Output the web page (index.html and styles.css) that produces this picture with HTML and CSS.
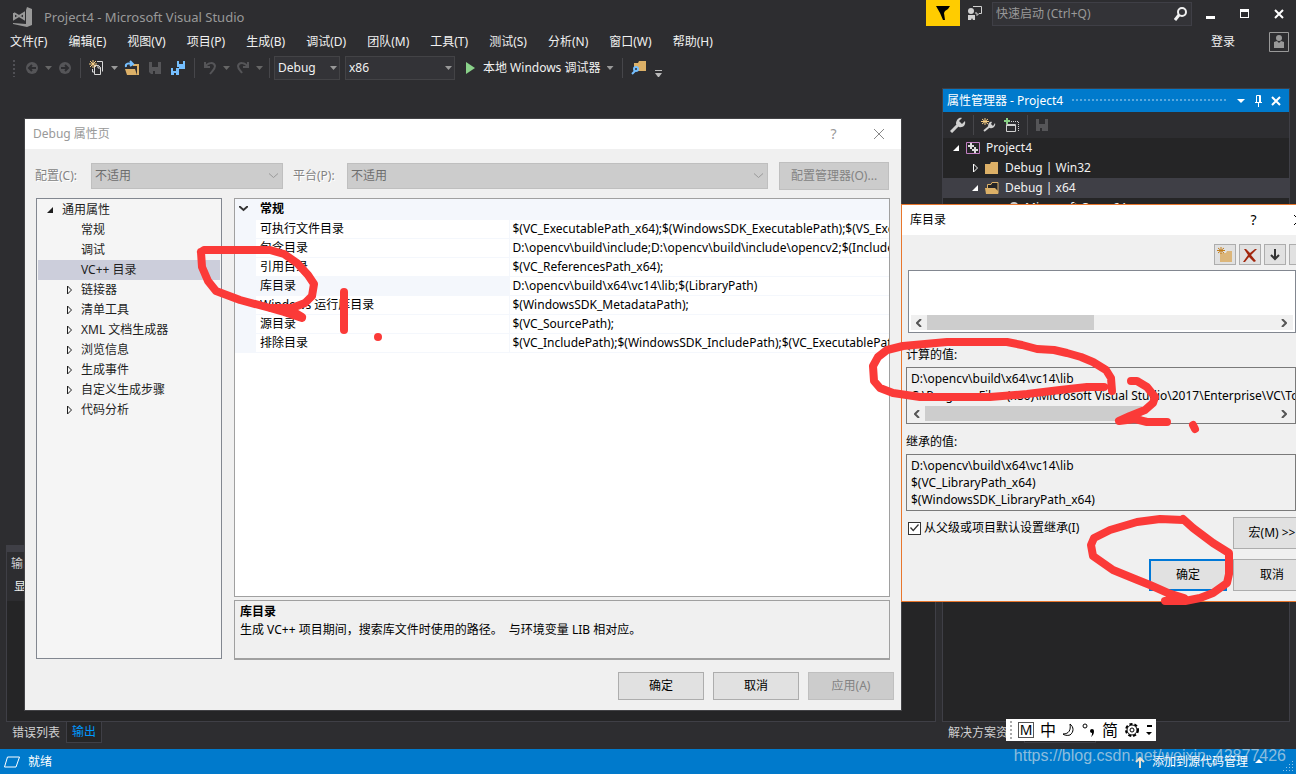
FILE: index.html
```html
<!DOCTYPE html>
<html lang="zh-CN">
<head>
<meta charset="utf-8">
<title>Project4 - Microsoft Visual Studio</title>
<link rel="stylesheet" href="styles.css">
</head>
<body>
<div class="ide">
  <header class="titlebar">
    <svg class="logo" width="21" height="20" viewBox="0 0 21 20"><path fill="#999" d="M15 0l5 2v16l-5 2-14-3v-1l13 1V3z"/><path fill="none" stroke="#999" stroke-width="2" d="M2 6v6l10-6v6L2 6"/></svg>
    <span class="app-title">Project4 - Microsoft Visual Studio</span>
    <button class="flag" aria-label="通知"><svg width="16" height="16" viewBox="0 0 16 16"><path d="M1 1h14l-2 3-3 2-1 2 1 7H8L5 8z"/></svg></button>
    <button class="feedback" aria-label="反馈"><svg width="16" height="16" viewBox="0 0 16 16"><path fill="#d0d0d0" d="M1 10h7v5H6l-1-2-1 2H1z"/><circle cx="4" cy="6" r="3" fill="#d0d0d0"/><path fill="none" stroke="#d0d0d0" d="M6 1.500h8.500v7H12l-2 2V8H8"/></svg></button>
    <div class="search"><input type="text" placeholder="快速启动 (Ctrl+Q)" aria-label="快速启动"><svg width="14" height="14" viewBox="0 0 14 14"><circle cx="8" cy="5" r="4" fill="none" stroke="#f1f1f1" stroke-width="2"/><path stroke="#f1f1f1" stroke-width="3" d="M5 8l-4 5"/></svg></div>
    <div class="window-buttons">
      <button aria-label="最小化"><svg width="12" height="12" viewBox="0 0 12 12"><path fill="#fff" d="M1 8h9v3H1z"/></svg></button>
      <button aria-label="最大化"><svg width="12" height="12" viewBox="0 0 12 12"><path fill="#fff" fill-rule="evenodd" d="M1 1h9v9H1zM2 4v5h7V4z"/></svg></button>
      <button aria-label="关闭"><svg width="12" height="12" viewBox="0 0 12 12"><path stroke="#fff" stroke-width="2" d="M2 2l8 8M10 2l-8 8"/></svg></button>
    </div>
  </header>

  <nav class="menubar">
    <button>文件(F)</button><button>编辑(E)</button><button>视图(V)</button><button>项目(P)</button><button>生成(B)</button><button>调试(D)</button><button>团队(M)</button><button>工具(T)</button><button>测试(S)</button><button>分析(N)</button><button>窗口(W)</button><button>帮助(H)</button>
    <a class="signin" href="#">登录</a>
    <svg class="avatar" width="20" height="20" viewBox="0 0 20 20"><path fill="none" stroke="#999" d="M.5.5h19v19H.5z"/><circle cx="10" cy="6" r="3" fill="#999"/><path fill="#999" d="M5 10l3-1 2 2 2-2 3 1v6H5z"/></svg>
  </nav>

  <div class="toolbar">
    <i class="grip"></i>
    <button class="tool" aria-label="后退"><svg width="14" height="14" viewBox="0 0 14 14"><circle cx="7" cy="7" r="6" fill="#555558"/><path fill="none" stroke="#2d2d30" stroke-width="2" d="M11 7H4M7 4L4 7l3 3"/></svg></button>
    <i class="caret dim"></i>
    <button class="tool" aria-label="前进"><svg width="14" height="14" viewBox="0 0 14 14"><circle cx="7" cy="7" r="6" fill="#555558"/><path fill="none" stroke="#2d2d30" stroke-width="2" d="M3 7h7M7 4l3 3-3 3"/></svg></button>
    <i class="rule"></i>
    <button class="tool" aria-label="新建项目"><svg width="16" height="16" viewBox="0 0 16 16"><path fill="none" stroke="#d8d8d8" d="M8 1.500h5.500v10M3.500 9v3H5M5.500 5.500h4l2 2v7h-6zM9 5v3h3"/><path stroke="#f5cc84" d="M4 0v8M0 4h8M1 1l6 6M7 1L1 7"/></svg></button>
    <i class="caret"></i>
    <button class="tool" aria-label="打开文件"><svg width="16" height="16" viewBox="0 0 16 16"><path fill="#dcb067" d="M1 9h10l2 6H3zM9 4h6v11h-2V6H9z"/><path fill="none" stroke="#75bfff" stroke-width="2" d="M2 7c-1-4 3-4 6-3M6 1l3 3-3 2"/></svg></button>
    <button class="tool" aria-label="保存"><svg width="14" height="14" viewBox="0 0 14 14"><path fill="#555558" fill-rule="evenodd" d="M1 1h12v12H3l-2-2zM4 1v5h6V1zM5 10v3h2v-3z"/></svg></button>
    <button class="tool" aria-label="全部保存"><svg width="16" height="16" viewBox="0 0 16 16"><path fill="#75bfff" fill-rule="evenodd" d="M7 1h2v3h4V1h2v8H9V7H7zM1 8h2v3h3V8h3v7H1zM4 13v2h2v-2z"/></svg></button>
    <i class="rule"></i>
    <button class="tool" aria-label="撤消"><svg width="14" height="14" viewBox="0 0 14 14"><path fill="none" stroke="#555558" stroke-width="2" d="M2 1v5h5M2 6c3-5 9-5 10-1 0 3-2 4-5 8"/></svg></button>
    <i class="caret dim"></i>
    <button class="tool" aria-label="重做"><svg width="14" height="14" viewBox="0 0 14 14"><path fill="none" stroke="#555558" stroke-width="2" d="M12 1v5H7M12 6C9 1 3 1 2 5c0 3 2 4 4 7"/></svg></button>
    <i class="caret dim"></i>
    <i class="rule"></i>
    <div class="combo config"><select aria-label="解决方案配置"><option>Debug</option></select><i class="caret"></i></div>
    <div class="combo platform"><select aria-label="解决方案平台"><option>x86</option></select><i class="caret"></i></div>
    <button class="run"><svg width="9" height="12" viewBox="0 0 9 12"><path fill="#8ad28a" d="M0 0l9 6-9 6z"/></svg>本地 Windows 调试器<i class="caret"></i></button>
    <i class="rule"></i>
    <button class="tool" aria-label="在文件中查找"><svg width="16" height="16" viewBox="0 0 16 16"><path fill="#dcb067" d="M3 3h4l1-2h7v10H3z"/><circle cx="5" cy="9" r="2" fill="#2d2d30" stroke="#75bfff" stroke-width="2"/><path stroke="#75bfff" stroke-width="2" d="M4 11l-3 3"/></svg></button>
    <svg class="overflow" width="7" height="7" viewBox="0 0 7 7"><path fill="#bbb" d="M0 0h7v1H0zM0 3h7L4 7H3z"/></svg>
  </div>

  <main class="workspace">
    <section class="left-dock">
      <div class="output">
        <div class="output-title">输出</div>
        <div class="output-bar">显示输出来源(S):</div>
        <div class="output-body"></div>
      </div>
      <div class="tabs"><button>错误列表</button><button class="active">输出</button></div>
    </section>
    <section class="right-dock">
      <div class="panel">
        <div class="panel-title"><span>属性管理器 - Project4</span><i class="dots"></i>
          <svg width="10" height="6" viewBox="0 0 10 6"><path fill="#fff" d="M1 1h8L5 5z"/></svg>
          <svg width="9" height="12" viewBox="0 0 9 12"><path fill="none" stroke="#fff" d="M2.500 7V.5h4V7M1 7.500h7M4.500 8v4M5.500 1v6"/></svg>
          <svg width="10" height="10" viewBox="0 0 10 10"><path stroke="#fff" stroke-width="2" d="M1 1l8 8M9 1L1 9"/></svg>
        </div>
        <div class="panel-tools">
          <svg width="16" height="16" viewBox="0 0 16 16"><path stroke="#d0d0d0" stroke-width="3" d="M1 15l7-7"/><path fill="#d0d0d0" d="M6 7c0-4 3-7 6-6l-3 3 3 3 3-3c1 4-2 7-6 6z"/></svg>
          <i class="rule"></i>
          <svg width="16" height="16" viewBox="0 0 16 16"><path stroke="#d0d0d0" stroke-width="2" d="M3 14l6-5"/><path fill="#d0d0d0" d="M7 10c0-4 2-6 4-5l-1 2 2 2 2-3c1 3-2 6-5 5z"/><path stroke="#f5cc84" d="M4 1v7M0 4.500h8M1 2l6 5M7 2L1 7"/></svg>
          <svg width="16" height="16" viewBox="0 0 16 16"><path fill="none" stroke="#d0d0d0" d="M2.500 7.500h9v7h-9zM2 8.500h10"/><path stroke="#89d185" stroke-width="2" d="M3 1v6M0 4h6"/><path fill="none" stroke="#d0d0d0" stroke-dasharray="1 1" d="M7 4.500h7M14.500 5v9"/></svg>
          <i class="rule"></i>
          <svg width="14" height="14" viewBox="0 0 14 14"><path fill="#555558" fill-rule="evenodd" d="M1 1h12v12H1zM4 1v5h6V1zM5 10v3h2v-3z"/></svg>
        </div>
        <ul class="solution">
          <li><svg width="8" height="8" viewBox="0 0 8 8"><path fill="#fff" d="M7 1v6H1z"/></svg><svg width="14" height="12" viewBox="0 0 14 12"><path fill="#252526" stroke="#c27fc2" d="M.5.5h13v11H.5z"/><path stroke="#ddd" stroke-width="2" d="M5 1v6M2 4h6M9 5v6M6 8h6"/></svg>Project4</li>
          <li class="child"><svg width="8" height="10" viewBox="0 0 8 10"><path fill="none" stroke="#fff" d="M2.500 1v8l4-4z"/></svg><svg width="14" height="12" viewBox="0 0 14 12"><path fill="#dcb067" d="M0 2h5l1-2h7v12H0z"/></svg>Debug | Win32</li>
          <li class="child selected"><svg width="8" height="8" viewBox="0 0 8 8"><path fill="#fff" d="M7 1v6H1z"/></svg><svg width="14" height="12" viewBox="0 0 14 12"><path fill="#252526" stroke="#dcb067" d="M2.500 7V2.500H6l1-2h6v11"/><path fill="#dcb067" d="M0 6h10l3 3v3H1z"/></svg>Debug | x64</li>
          <li class="leaf"><svg width="14" height="14" viewBox="0 0 14 14"><path stroke="#ccc" stroke-width="3" d="M1 13l6-6"/><circle cx="9" cy="5" r="4" fill="#ccc"/></svg>Microsoft.Cpp.x64.user</li>
        </ul>
      </div>
      <div class="tabs"><button>解决方案资...</button><button class="active">属性管理器</button></div>
    </section>
  </main>

  <footer class="status">
    <svg width="16" height="12" viewBox="0 0 16 12"><path fill="none" stroke="#fff" d="M3.500 1h12L12 11H.5z"/></svg>
    <span>就绪</span>
    <button class="source"><svg width="10" height="12" viewBox="0 0 10 12"><path fill="none" stroke="#e8e0d0" stroke-width="2" d="M5 12V2M1 6l4-4 4 4"/></svg>添加到源代码管理<svg width="8" height="5" viewBox="0 0 8 5"><path fill="#fff" d="M4 0l4 4H0z"/></svg></button>
    <svg class="resize" width="10" height="10" viewBox="0 0 10 10"><path stroke="#8dc3ea" stroke-dasharray="1 2" d="M9.500 0v10M6.500 3v7M3.500 6v4M.5 9v1"/></svg>
  </footer>

  <section class="dialog pages" role="dialog" aria-label="Debug 属性页">
    <div class="dialog-title"><span>Debug 属性页</span><button aria-label="帮助">?</button><button aria-label="关闭"><svg width="12" height="12" viewBox="0 0 12 12"><path stroke="#888" d="M1 1l10 10M11 1L1 11"/></svg></button></div>
    <div class="pages-body">
      <div class="config-row">
        <label for="cfg">配置(C):</label>
        <div class="drop cfg"><select id="cfg" disabled><option>不适用</option></select><svg width="9" height="6" viewBox="0 0 9 6"><path fill="none" stroke="#999" d="M0 .5l4.500 4 4.500-4"/></svg></div>
        <label for="plat">平台(P):</label>
        <div class="drop plat"><select id="plat" disabled><option>不适用</option></select><svg width="9" height="6" viewBox="0 0 9 6"><path fill="none" stroke="#999" d="M0 .5l4.500 4 4.500-4"/></svg></div>
        <button class="btn manager" disabled>配置管理器(O)...</button>
      </div>
      <div class="split">
        <ul class="tree">
          <li class="root"><svg width="8" height="8" viewBox="0 0 8 8"><path fill="#1e1e1e" d="M7 1v6H1z"/></svg>通用属性</li>
          <li>常规</li>
          <li>调试</li>
          <li class="selected">VC++ 目录</li>
          <li class="closed"><svg width="6" height="10" viewBox="0 0 6 10"><path fill="none" stroke="#1e1e1e" d="M1.500 1v8l4-4z"/></svg>链接器</li>
          <li class="closed"><svg width="6" height="10" viewBox="0 0 6 10"><path fill="none" stroke="#1e1e1e" d="M1.500 1v8l4-4z"/></svg>清单工具</li>
          <li class="closed"><svg width="6" height="10" viewBox="0 0 6 10"><path fill="none" stroke="#1e1e1e" d="M1.500 1v8l4-4z"/></svg>XML 文档生成器</li>
          <li class="closed"><svg width="6" height="10" viewBox="0 0 6 10"><path fill="none" stroke="#1e1e1e" d="M1.500 1v8l4-4z"/></svg>浏览信息</li>
          <li class="closed"><svg width="6" height="10" viewBox="0 0 6 10"><path fill="none" stroke="#1e1e1e" d="M1.500 1v8l4-4z"/></svg>生成事件</li>
          <li class="closed"><svg width="6" height="10" viewBox="0 0 6 10"><path fill="none" stroke="#1e1e1e" d="M1.500 1v8l4-4z"/></svg>自定义生成步骤</li>
          <li class="closed"><svg width="6" height="10" viewBox="0 0 6 10"><path fill="none" stroke="#1e1e1e" d="M1.500 1v8l4-4z"/></svg>代码分析</li>
        </ul>
        <div class="details">
          <div class="grid">
            <table>
              <colgroup><col class="gutter"><col class="name"><col></colgroup>
              <thead><tr><th><svg width="9" height="6" viewBox="0 0 9 6"><path fill="none" stroke="#333" stroke-width="2" d="M0 0l4.500 4L9 0"/></svg></th><th colspan="2">常规</th></tr></thead>
              <tbody>
                <tr><td></td><td>可执行文件目录</td><td>$(VC_ExecutablePath_x64);$(WindowsSDK_ExecutablePath);$(VS_ExecutablePath)</td></tr>
                <tr><td></td><td>包含目录</td><td>D:\opencv\build\include;D:\opencv\build\include\opencv2;$(IncludePath)</td></tr>
                <tr><td></td><td>引用目录</td><td>$(VC_ReferencesPath_x64);</td></tr>
                <tr class="current"><td></td><td>库目录</td><td>D:\opencv\build\x64\vc14\lib;$(LibraryPath)</td></tr>
                <tr><td></td><td>Windows 运行库目录</td><td>$(WindowsSDK_MetadataPath);</td></tr>
                <tr><td></td><td>源目录</td><td>$(VC_SourcePath);</td></tr>
                <tr><td></td><td>排除目录</td><td>$(VC_IncludePath);$(WindowsSDK_IncludePath);$(VC_ExecutablePath_x64)</td></tr>
              </tbody>
            </table>
          </div>
          <div class="description"><b>库目录</b><p>生成 VC++ 项目期间，搜索库文件时使用的路径。&nbsp; 与环境变量 LIB 相对应。</p></div>
        </div>
      </div>
      <div class="actions"><button class="btn">确定</button><button class="btn">取消</button><button class="btn" disabled>应用(A)</button></div>
    </div>
  </section>

  <section class="dialog library" role="dialog" aria-label="库目录">
    <div class="dialog-title"><span>库目录</span><button aria-label="帮助">?</button><button aria-label="关闭"><svg width="12" height="12" viewBox="0 0 12 12"><path stroke="#000" d="M1 1l10 10M11 1L1 11"/></svg></button></div>
    <div class="library-body">
      <div class="list-tools">
        <button aria-label="新行"><svg width="16" height="16" viewBox="0 0 16 16"><path fill="#dcb67a" d="M3 6h6l1-2h5v11H3z"/><path stroke="#c27d1a" d="M4 0v7M0 3.500h8M1 1l6 5M7 1L1 6"/></svg></button>
        <button aria-label="删除"><svg width="16" height="16" viewBox="0 0 16 16"><path fill="#a1260d" d="M2 2h2l4 4 5-4h2L9 8l5 6-2 1-5-5-4 5H1l5-7z"/></svg></button>
        <button aria-label="下移"><svg width="10" height="14" viewBox="0 0 10 14"><path fill="none" stroke="#333" stroke-width="2" d="M5 1v10M1 7l4 4 4-4"/></svg></button>
        <button aria-label="上移"></button>
      </div>
      <div class="list editor"><div class="lines"></div><div class="scroll"><svg width="6" height="8" viewBox="0 0 6 8"><path fill="none" stroke="#555" stroke-width="2" d="M5 0L1 4l4 4"/></svg><i></i><svg width="6" height="8" viewBox="0 0 6 8"><path fill="none" stroke="#555" stroke-width="2" d="M1 0l4 4-4 4"/></svg></div></div>
      <h3>计算的值:</h3>
      <div class="list"><div class="lines">D:\opencv\build\x64\vc14\lib<br>C:\Program Files (x86)\Microsoft Visual Studio\2017\Enterprise\VC\Tools</div><div class="scroll wide"><svg width="6" height="8" viewBox="0 0 6 8"><path fill="none" stroke="#555" stroke-width="2" d="M5 0L1 4l4 4"/></svg><i></i><svg width="6" height="8" viewBox="0 0 6 8"><path fill="none" stroke="#555" stroke-width="2" d="M1 0l4 4-4 4"/></svg></div></div>
      <h3>继承的值:</h3>
      <div class="list"><div class="lines">D:\opencv\build\x64\vc14\lib<br>$(VC_LibraryPath_x64)<br>$(WindowsSDK_LibraryPath_x64)</div></div>
      <div class="inherit"><label><input type="checkbox" checked>从父级或项目默认设置继承(I)</label><button class="btn">宏(M) &gt;&gt;</button></div>
      <div class="confirm"><button class="btn primary">确定</button><button class="btn">取消</button></div>
    </div>
  </section>

  <div class="ime"><i class="handle"></i><span class="mode">M</span><span>中</span>
    <svg width="14" height="14" viewBox="0 0 14 14"><path fill="none" stroke="#000" d="M8 1c4 3 4 8 0 11-3 1-6 0-7-1 6 0 8-4 7-10z"/></svg>
    <svg width="14" height="16" viewBox="0 0 14 16"><circle cx="3" cy="4" r="2" fill="none" stroke="#000"/><path d="M8 9a2 2 0 1 1 4 0c0 3-1 4-3 6 1-2 1-3 1-4-1 0-2-1-2-2z"/></svg>
    <span>简</span>
    <svg width="16" height="16" viewBox="0 0 16 16"><circle cx="8" cy="8" r="6" fill="none" stroke="#000" stroke-width="2" stroke-dasharray="3 2"/><circle cx="8" cy="8" r="5" fill="#fff" stroke="#000"/><circle cx="8" cy="8" r="2" fill="none" stroke="#000"/></svg>
    <svg width="6" height="11" viewBox="0 0 6 11"><path d="M1 0h5v2H1zM0 7h6l-3 3z"/></svg>
  </div>
  <div class="watermark">https://blog.csdn.net/weixin_42877426</div>

  <svg class="ink" width="1296" height="774" viewBox="0 0 1296 774">
    <g fill="none" stroke="#fb3a38" stroke-width="8" stroke-linecap="round" stroke-linejoin="round">
      <path d="M201 252L204 250H270L284 254 297 263 308 275 314 284 312 296 305 303 292 308 270 308 240 300 216 291 208 281 202 267 201 252M270 308L284 312 302 318M270 308L292 311L302 317"/>
      <path d="M344 292v38"/>
      <path d="M1104 387H1087L1060 390 1027 394 990 397H920L893 393 880 388 874 381 873 366 878 357 887 350 903 346 947 342H1007L1022 345 1037 349 1054 350 1067 353 1081 357 1093 362 1106 370 1111 378 1112 391"/>
      <path d="M1131 381H1137L1147 387 1155 397 1153 403 1145 410 1130 416 1119 421 1135 419 1147 422H1167M1193 425L1195 429"/>
      <path d="M1183 520L1160 519 1137 522 1110 530 1094 538 1091 545 1093 556 1113 570 1135 579 1150 585 1168 593 1184 598 1165 601H1185L1200 598 1213 593 1227 583 1229 574V553L1213 543 1193 528 1183 519"/>
    </g>
    <circle cx="378" cy="337" r="4" fill="#fb3a38"/>
  </svg>
</div>
</body>
</html>
```
FILE: styles.css
```css
* { box-sizing: border-box; }
body { margin: 0; font: 12px/16px "Noto Sans", "Noto Sans CJK SC", sans-serif; color: #f1f1f1; }
button, input, select { font: inherit; color: inherit; }
button { border: 0; background: none; padding: 0; white-space: nowrap; }
ul { list-style: none; margin: 0; padding: 0; }
svg { display: block; flex: none; }
select { appearance: none; border: 0; background: none; }

.ide { position: relative; display: flex; flex-direction: column; height: 100vh; overflow: hidden; background: #2d2d30; }

.titlebar { display: flex; align-items: flex-start; height: 30px; }
.logo { margin: 7px 11px 0 12px; }
.app-title { flex: 1; margin-top: 9px; color: #999; font-size: 13px; }
.flag { display: grid; place-items: center; width: 34px; height: 26px; background: #fc0; }
.feedback { margin: 5px 9px 0 7px; }
.search { display: flex; align-items: center; width: 200px; height: 24px; margin-top: 2px; padding: 0 3px; border: 1px solid #3f3f46; background: #333337; }
.search input { flex: 1; min-width: 0; padding: 0; border: 0; background: none; }
.search input::placeholder { color: #999; }
.window-buttons { display: flex; gap: 22px; padding: 8px 11px 0 13px; }

.menubar { display: flex; align-items: center; gap: 21px; height: 24px; padding: 0 7px 0 10px; }
.signin { margin-left: auto; color: inherit; text-decoration: none; }
.avatar { margin-left: 13px; }

.toolbar { display: flex; align-items: center; height: 28px; padding-left: 12px; }
.grip { width: 5px; height: 18px; background: radial-gradient(#505055 1px, transparent 1px) 0 0 / 4px 4px; }
.tool { margin: 0 4px; }
.grip + .tool { margin-left: 8px; }
.caret { flex: none; width: 7px; height: 4px; margin: 0 2px; background: #999; clip-path: polygon(0 0, 100% 0, 50% 100%); }
.caret.dim { background: #666; }
.rule { flex: none; width: 1px; height: 20px; margin: 0 4px; background: #46464a; }
.combo { display: flex; align-items: center; height: 24px; border: 1px solid #434346; background: #333337; }
.combo select { flex: 1; min-width: 0; padding: 0 3px; }
.config { width: 66px; margin-right: 5px; }
.platform { width: 110px; }
.run { display: flex; align-items: center; gap: 4px; margin: 0 2px 0 11px; }
.run svg { margin-right: 4px; }
.overflow { margin: 10px 0 0 4px; }

.workspace { flex: 1; display: flex; gap: 6px; min-height: 0; padding: 6px; }
.left-dock { flex: 1; display: flex; flex-direction: column; justify-content: flex-end; min-width: 0; }
.output { display: flex; flex-direction: column; height: 177px; border: 1px solid #3f3f46; }
.output-title { padding: 4px 4px 0; height: 28px; border-top: 6px solid #3f3f46; color: #d0d0d0; }
.output-bar { height: 27px; padding: 5px 7px; }
.output-body { flex: 1; background: #252526; }
.right-dock { display: flex; flex-direction: column; width: 348px; }
.panel { flex: 1; border: 1px solid #3f3f46; background: #252526; }
.panel-title { display: flex; align-items: center; gap: 8px; height: 23px; padding: 0 8px 0 4px; background: #007acc; color: #fff; }
.dots { flex: 1; height: 5px; background: radial-gradient(#59a8de 1px, transparent 1px) 0 0 / 4px 4px; }
.panel-tools { display: flex; align-items: center; gap: 7px; height: 26px; padding: 0 7px; background: #2d2d30; }
.panel-tools .rule { margin: 0; }
.solution li { display: flex; align-items: center; gap: 6px; height: 20px; padding-left: 9px; }
.solution .child { padding-left: 28px; }
.solution .leaf { padding-left: 62px; }
.solution .selected { background: #3f3f46; }

.tabs { display: flex; align-items: flex-start; height: 21px; color: #d0d0d0; }
.tabs button { height: 21px; padding: 0 6px; }
.tabs .active { padding: 0 5px; border: 1px solid #3f3f46; border-top: 0; background: #252526; color: #0097fb; }

.status { display: flex; align-items: center; gap: 8px; height: 25px; padding: 0 3px 0 4px; background: #007acc; color: #fff; }
.source { display: flex; align-items: center; gap: 7px; margin-left: auto; }
.resize { margin: 8px 0 0 12px; }

.dialog { position: absolute; background: #f0f0f0; color: #000; }
.dialog-title { display: flex; align-items: center; height: 30px; background: #fff; }
.dialog-title span { flex: 1; padding-left: 8px; }
.dialog-title button { width: 45px; font-size: 14px; }
.dialog-title svg { margin: auto; }
.btn { flex: none; border: 1px solid #adadad; background: #e1e1e1; }
.btn:disabled { border-color: #bfbfbf; background: #ccc; color: #838383; }
.primary { border: 2px solid #0078d7; }

.pages { left: 25px; top: 119px; width: 876px; box-shadow: 0 0 0 1px #434346; }
.pages .dialog-title { color: #999; }
.pages-body { padding: 13px 7px 10px 10px; }
.config-row { display: flex; align-items: center; height: 28px; padding-right: 5px; }
.config-row label { width: 45px; color: #838383; text-shadow: 1px 1px #fff; }
.drop { display: grid; align-items: center; height: 26px; border: 1px solid #bfbfbf; background: #ccc; }
.drop select, .drop svg { grid-area: 1 / 1; }
.drop select { padding: 0 3px; opacity: 1; color: #6d6d6d; }
.drop svg { justify-self: end; margin-right: 4px; }
.cfg { width: 192px; margin: 0 10px 0 11px; }
.plat { flex: 1; margin-left: 9px; }
.manager { width: 110px; height: 28px; margin-left: 11px; }
.split { display: flex; gap: 12px; height: 462px; margin-top: 8px; padding: 0 4px 0 1px; }
.tree { width: 186px; height: 461px; padding: 1px; border: 1px solid #828790; background: #f5f5f5; color: #1e1e1e; }
.tree li { display: flex; align-items: center; height: 20px; padding-left: 43px; }
.tree .root { gap: 8px; padding-left: 8px; }
.tree .closed { gap: 9px; padding-left: 28px; }
.tree .selected { background: #cccedb; }
.details { flex: 1; display: flex; flex-direction: column; gap: 3px; min-width: 0; }
.grid { flex: 1; overflow: hidden; border: 1px solid #a0a0a0; background: #fff; }
table { width: 100%; table-layout: fixed; border-collapse: collapse; }
.gutter { width: 21px; }
.name { width: 253px; }
th, td { height: 19px; padding: 0 4px; border-bottom: 1px solid #f4f7fc; text-align: left; line-height: 18px; white-space: nowrap; overflow: hidden; }
td:last-child { padding-right: 0; border-left: 1px solid #f4f7fc; padding-left: 3px; }
th, td:first-child, .current td:nth-child(2) { background: #f4f7fc; }
th { height: 20px; }
.description { height: 60px; padding: 3px 5px; border: 1px solid #a0a0a0; border-bottom-width: 2px; }
.description p { margin: 2px 0 0; }
.actions { display: flex; justify-content: flex-end; gap: 9px; margin-top: 12px; }
.actions .btn { width: 86px; height: 28px; }

.library { left: 901px; top: 204px; right: -1px; height: 398px; overflow: hidden; border: 1px solid #e8762c; }
.library .dialog-title { margin-right: -25px; }
.library-body { padding: 9px 0 0 4px; }
.list-tools { display: flex; justify-content: flex-end; gap: 3px; margin-right: -15px; }
.list-tools button { display: grid; place-items: center; width: 22px; height: 21px; border: 1px solid #adadad; background: #e1e1e1; }
.list { height: 57px; padding: 2px; border: 1px solid #7a7a7a; overflow: hidden; }
.lines { height: 36px; padding: 0 2px; line-height: 17px; white-space: nowrap; }
.wide, .editor .scroll { position: relative; }
.editor { height: 63px; margin: 5px 0 0 2px; border-color: #828790; background: #fff; }
.editor .lines { height: 42px; }
.scroll { display: flex; align-items: center; height: 15px; padding: 0 6px 0 5px; background: #f0f0f0; }
.scroll i { width: 167px; height: 15px; margin: 0 auto 0 5px; background: #cdcdcd; }
.wide i { width: 217px; }
h3 { margin: 10px 0 4px; font: inherit; }
.editor + h3 { margin-top: 14px; }
.inherit { display: flex; align-items: flex-start; justify-content: space-between; height: 36px; margin: 6px -15px 0 0; }
.inherit label { display: flex; align-items: center; gap: 3px; margin-top: 3px; }
.inherit input { display: grid; place-items: center; appearance: none; width: 13px; height: 13px; margin: 0 0 0 2px; border: 1px solid #333; background: #fff; }
.inherit input:checked::before { content: ""; width: 9px; height: 8px; background: #333; clip-path: polygon(0 50%, 11% 38%, 36% 68%, 89% 0, 100% 12%, 36% 94%); }
.inherit .btn, .confirm .btn { width: 78px; height: 32px; }
.confirm { display: flex; justify-content: flex-end; gap: 6px; margin: 6px -15px 0 0; }

.ime { position: absolute; left: 1006px; top: 719px; display: flex; align-items: center; gap: 6px; height: 22px; padding: 0 4px; background: #fff; color: #000; font-size: 16px; }
.handle { width: 2px; height: 18px; background: repeating-linear-gradient(#aaa 0 2px, transparent 2px 4px); }
.mode { width: 16px; height: 16px; border: 1px solid #555; font-size: 14px; line-height: 14px; text-align: center; }
.watermark { position: absolute; right: 10px; bottom: 9px; font: 16px/18px "Liberation Sans", sans-serif; color: rgba(220, 226, 232, .65); }
.ink { position: absolute; left: 0; top: 0; pointer-events: none; }
```
